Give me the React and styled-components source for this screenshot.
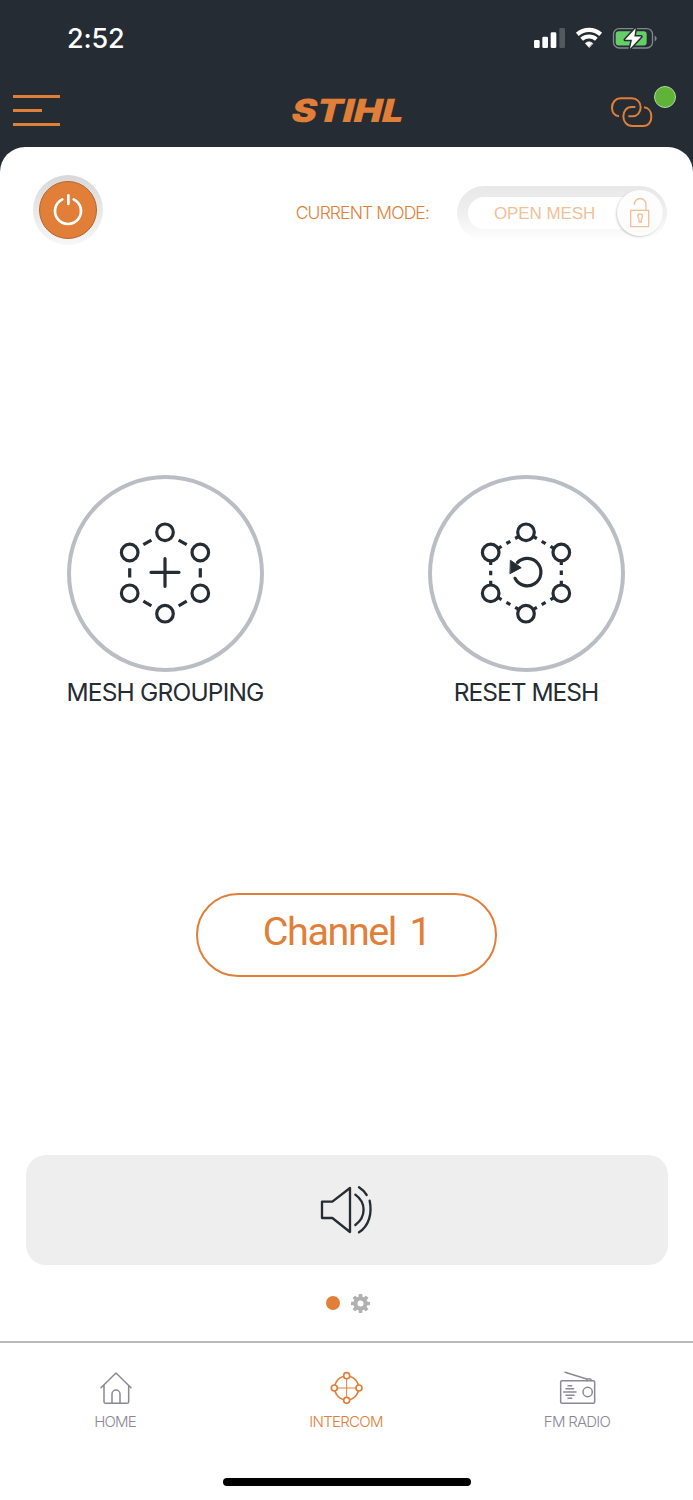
import React from "react";
import styled, { createGlobalStyle } from "styled-components";

const orange = "#e17e37";
const ink = "#252c33";
const muted = "#8c8896";

const Global = createGlobalStyle`
  *, *::before, *::after { box-sizing: border-box; }
  body { margin: 0; background: ${ink}; }
  button { font: inherit; color: inherit; background: none; border: 0; padding: 0; }
`;

const Screen = styled.div`
  width: 693px;
  height: 1500px;
  display: flex;
  flex-direction: column;
  overflow: hidden;
  background: ${ink};
  font-family: Inter, "Liberation Sans", sans-serif;
`;

const Icon = styled.svg`
  display: block;
  flex: none;
  width: ${(p) => p.$w}px;
  height: ${(p) => p.$h}px;
  overflow: visible;
  fill: none;
  stroke: ${(p) => p.$color || "none"};
  stroke-width: ${(p) => p.$stroke || 0};
  stroke-linecap: round;
  stroke-linejoin: round;
`;

/* status bar */
const StatusBar = styled.div`
  height: 76px;
  flex: none;
  display: flex;
  justify-content: space-between;
  align-items: center;
  padding: 0 36px 0 67px;
`;

const Clock = styled.span`
  padding-top: 2px;
  color: #fff;
  font-size: 27px;
  font-weight: 550;
  line-height: 32px;
  letter-spacing: -0.2px;
`;

const StatusIcons = styled.div`
  display: flex;
  align-items: center;
  gap: 11px;
`;

/* app header */
const Header = styled.header`
  height: 71px;
  flex: none;
  display: grid;
  grid-template-columns: 1fr auto 1fr;
  align-items: start;
  padding: 0 17px 0 13px;
`;

const MenuButton = styled.button`
  width: 47px;
  margin-top: 19px;
  display: flex;
  flex-direction: column;
  gap: 11px;
`;

const MenuLine = styled.span`
  height: 3px;
  width: ${(p) => p.$w}px;
  background: ${orange};
`;

const Logo = styled.svg`
  display: block;
  width: 111px;
  height: 24px;
  margin-top: 22px;
  overflow: visible;
`;

const LinkStatus = styled.div`
  justify-self: end;
  display: flex;
  align-items: flex-start;
  gap: 1px;
`;

const LinkIconBox = styled.div`
  padding-top: 21px;
`;

const OnlineDot = styled.span`
  width: 22px;
  height: 22px;
  margin-top: 10px;
  border-radius: 50%;
  background: #5fb336;
  border: 1px solid #b4d7a2;
`;

/* main sheet */
const Sheet = styled.main`
  flex: 1;
  display: flex;
  flex-direction: column;
  background: #fff;
  border-radius: 25px 25px 0 0;
`;

const TopRow = styled.div`
  display: flex;
  align-items: center;
  padding: 28px 26px 0 33px;
`;

const PowerRing = styled.button`
  width: 70px;
  height: 70px;
  border-radius: 50%;
  padding: 6px;
  background: linear-gradient(#d8d8d8, #f7f7f7);
`;

const PowerFace = styled.span`
  width: 58px;
  height: 58px;
  border-radius: 50%;
  display: grid;
  place-items: center;
  background: ${orange};
  border: 1.5px solid #b5672f;
`;

const ModeLabel = styled.span`
  margin: 6px 28px 0 auto;
  color: ${orange};
  font-size: 17.5px;
  font-weight: 300;
  letter-spacing: -0.87px;
  line-height: 20px;
  white-space: nowrap;
`;

const ModeToggle = styled.div`
  width: 210px;
  height: 54px;
  margin-top: 6px;
  padding: 4px 4px 0 11px;
  border-radius: 27px;
  display: flex;
  align-items: center;
  background: linear-gradient(#e8e8e8, #efefef 50%, #fefefe);
`;

const ModeValue = styled.span`
  flex: 1;
  height: 32px;
  margin: 0 -24px 4px 0;
  padding-left: 26px;
  border-radius: 16px;
  background: #fff;
  color: #f2bf98;
  font-family: "Liberation Sans", Arial, sans-serif;
  font-size: 17px;
  line-height: 33px;
  letter-spacing: -0.1px;
  white-space: nowrap;
`;

const ModeKnob = styled.span`
  width: 46px;
  height: 46px;
  margin-bottom: 4px;
  flex: none;
  border-radius: 50%;
  display: grid;
  place-items: center;
  background: #fdfdfd;
  box-shadow: -1px 1px 2px rgba(0, 0, 0, 0.18);
`;

const Actions = styled.section`
  display: flex;
  justify-content: space-between;
  padding: 230px 68px 0 67px;
`;

const Action = styled.button`
  width: 197px;
  display: flex;
  flex-direction: column;
  align-items: center;
`;

const ActionCircle = styled.span`
  width: 197px;
  height: 197px;
  padding: 0 2px 2px 0;
  border: 4px solid #babec4;
  border-radius: 50%;
  display: grid;
  place-items: center;
`;

const ActionLabel = styled.span`
  margin-top: 5px;
  margin-right: 1px;
  color: ${ink};
  font-size: 24.5px;
  font-weight: 370;
  line-height: 30px;
  letter-spacing: ${(p) => p.$tracking}px;
  white-space: nowrap;
`;

const ChannelButton = styled.button`
  width: 301px;
  height: 84px;
  margin: 186px auto 0;
  padding-bottom: 6px;
  border: 2px solid ${orange};
  border-radius: 42px;
  color: ${orange};
  font-family: Roboto, "Open Sans", sans-serif;
  font-size: 39.5px;
  font-weight: 400;
  line-height: 74px;
  letter-spacing: -1.4px;
  word-spacing: 5px;
  white-space: nowrap;
`;

const VolumeBar = styled.button`
  height: 110px;
  margin: 178px 25.5px 0;
  padding-left: 1px;
  border-radius: 20px;
  display: grid;
  place-items: center;
  background: #eee;
`;

const Pager = styled.div`
  height: 76px;
  display: flex;
  align-items: center;
  justify-content: center;
  gap: 11px;
  padding-left: 3px;
`;

const PageDot = styled.span`
  width: 14px;
  height: 14px;
  border-radius: 50%;
  background: ${orange};
`;

const TabBar = styled.nav`
  flex: 1;
  display: flex;
  flex-direction: column;
  justify-content: space-between;
  align-items: center;
  border-top: 2px solid #b9b9bb;
`;

const Tabs = styled.div`
  width: 100%;
  display: grid;
  grid-template-columns: repeat(3, 1fr);
`;

const Tab = styled.button`
  display: flex;
  flex-direction: column;
  align-items: center;
  padding-top: 28px;
  color: ${(p) => (p.$active ? orange : muted)};
`;

const TabLabel = styled.span`
  margin-top: 6px;
  margin-right: 1px;
  font-size: 15px;
  font-weight: 350;
  letter-spacing: ${(p) => p.$tracking}px;
  line-height: 20px;
  white-space: nowrap;
`;

const HomeIndicator = styled.div`
  width: 248px;
  height: 8px;
  margin-bottom: 14px;
  border-radius: 4px;
  background: #000;
`;

const corners = [
  [0, -40.7],
  [35.3, -20.5],
  [35.3, 20.3],
  [0, 40.7],
  [-35.3, 20.3],
  [-35.3, -20.5],
];

function MeshIcon({ dash, offset = 0, children }) {
  return (
    <Icon $w={94} $h={104} $color={ink} $stroke={3.2} viewBox="-47 -52 94 104">
      {corners.map(([x, y], i) => {
        const [nx, ny] = corners[(i + 1) % 6];
        return (
          <line key={i} x1={x} y1={y} x2={nx} y2={ny} strokeLinecap="butt" strokeDasharray={dash} strokeDashoffset={offset} />
        );
      })}
      {corners.map(([x, y], i) => (
        <circle key={i} cx={x} cy={y} r="8.3" fill="#fff" />
      ))}
      {children}
    </Icon>
  );
}

function SignalIcon() {
  return (
    <Icon $w={31} $h={20} viewBox="101 84 93 60">
      <g fill="#fff">
        <rect x="101" y="120" width="17" height="24" rx="4" />
        <rect x="126" y="110" width="17" height="34" rx="4" />
        <rect x="151" y="97" width="17" height="47" rx="4" />
      </g>
      <rect x="177" y="84" width="17" height="60" rx="4" fill="#545960" />
    </Icon>
  );
}

function WifiIcon() {
  return (
    <Icon $w={26} $h={20} $color="#fff" viewBox="227 84 78 60">
      <path strokeLinecap="butt" strokeWidth="13" d="M231 103 A53 53 0 0 1 301 103" />
      <path strokeLinecap="butt" strokeWidth="12" d="M244 118 A33 33 0 0 1 288 118" />
      <path fill="#fff" strokeWidth="2" d="M266 142 L255 130 A17 17 0 0 1 277 130 Z" />
    </Icon>
  );
}

function BatteryIcon() {
  return (
    <Icon $w={44} $h={21} viewBox="340 83 132 62">
      <rect x="341.5" y="84.5" width="117" height="58" rx="17" stroke="#83888c" strokeWidth="4" />
      <path d="M465 105 Q471 109 471 114 Q471 119 465 123 Z" fill="#83888c" />
      <rect x="348" y="92" width="93" height="43" rx="9" fill="#65ce66" />
      <path d="M408 83 L376 118 H397 L391 145 L425 108 H404 Z" fill="#fff" stroke={ink} strokeWidth="9" paintOrder="stroke" />
    </Icon>
  );
}

function LinkIcon() {
  return (
    <Icon $w={42} $h={30} $color={orange} $stroke={6} viewBox="333 293 126 90">
      <path d="M357 351 C345 349 336 340 336 325 C336 309 347 297 362 297 H395 C411 297 422 308 422 324 C422 340 411 351 397 351 H385" strokeLinecap="butt" />
      <path d="M406 323 H395 C379 323 370 336 370 351 C370 367 380 380 397 380 H430 C445 380 454 368 454 352 C454 336 445 325 432 324" strokeLinecap="butt" />
    </Icon>
  );
}

function GearIcon() {
  return (
    <Icon $w={19} $h={19} viewBox="-28 -28 56 56">
      <circle r="15" stroke="#b1b1b1" strokeWidth="12" />
      {[0, 45, 90, 135, 180, 225, 270, 315].map((a) => (
        <rect key={a} x="-5.5" y="-28" width="11" height="11" rx="2" fill="#b1b1b1" transform={`rotate(${a})`} />
      ))}
    </Icon>
  );
}

export default function App() {
  return (
    <Screen>
      <Global />
      <StatusBar>
        <Clock>2:52</Clock>
        <StatusIcons>
          <SignalIcon />
          <WifiIcon />
          <BatteryIcon />
        </StatusIcons>
      </StatusBar>

      <Header>
        <MenuButton aria-label="Menu">
          <MenuLine $w={47} />
          <MenuLine $w={29} />
          <MenuLine $w={47} />
        </MenuButton>
        <Logo viewBox="0 0 111 24">
          <text
            transform="translate(0.5 23.6) skewX(-14)"
            textLength="112"
            lengthAdjust="spacingAndGlyphs"
            fontFamily="Inter, sans-serif"
            fontWeight="900"
            fontSize="32"
            fill={orange}
          >
            STIHL
          </text>
        </Logo>
        <LinkStatus>
          <LinkIconBox>
            <LinkIcon />
          </LinkIconBox>
          <OnlineDot />
        </LinkStatus>
      </Header>

      <Sheet>
        <TopRow>
          <PowerRing aria-label="Power">
            <PowerFace>
              <Icon $w={28} $h={30} $color="#fff" $stroke={8} viewBox="162 584 84 90">
                <path d="M187 597 A39 39 0 1 0 221 597 M205 585 V611" />
              </Icon>
            </PowerFace>
          </PowerRing>
          <ModeLabel>CURRENT MODE:</ModeLabel>
          <ModeToggle>
            <ModeValue>OPEN MESH</ModeValue>
            <ModeKnob>
              <Icon $w={19} $h={30} $color="#f2bf98" $stroke={4} viewBox="1053 84 57 90">
                <path strokeLinejoin="miter" d="M1052 121 H1106 V170 H1052 Z" />
                <path d="M1063 103 A17.500 17.500 0 0 1 1098 103 V120" />
                <path d="M1077 149 C1077 145 1073 144 1073 139 A7.500 7.500 0 0 1 1088 139 C1088 144 1084 145 1084 149 V156 H1077 Z" />
              </Icon>
            </ModeKnob>
          </ModeToggle>
        </TopRow>

        <Actions>
          <Action>
            <ActionCircle>
              <MeshIcon dash="0 15.7 9.3 100">
                <path d="M-14 -0.7 H14 M0 -14.500 V13.300" />
              </MeshIcon>
            </ActionCircle>
            <ActionLabel $tracking={-0.82}>MESH GROUPING</ActionLabel>
          </Action>
          <Action>
            <ActionCircle>
              <MeshIcon dash="4.500 5.600" offset={2.1}>
                <path d="M-11 5.300 A13.700 13.700 0 1 0 -8.500 -10.500" />
                <path d="M-15.300 -12.500 L-4.800 -5.300 L-15.700 0.500 Z" fill={ink} strokeWidth="1" />
              </MeshIcon>
            </ActionCircle>
            <ActionLabel $tracking={-1}>RESET MESH</ActionLabel>
          </Action>
        </Actions>

        <ChannelButton>Channel 1</ChannelButton>

        <VolumeBar aria-label="Volume">
          <Icon $w={52} $h={48} $color={ink} $stroke={7} viewBox="93 78 156 144">
            <path d="M96 125 H127 L180 84 V216 L127 174 H96 Z" />
            <path d="M196 104 C229 128 229 170 196 195 M207 82 Q221 91 230 105 M239 122 C247 160 237 198 207 217" />
          </Icon>
        </VolumeBar>

        <Pager>
          <PageDot />
          <GearIcon />
        </Pager>

        <TabBar>
          <Tabs>
            <Tab>
              <Icon $w={32} $h={35} $color={muted} $stroke={4.5} viewBox="119 123 96 105">
                <path d="M122 173 L167 129 L212 173 M131 166 V215 Q131 220 136 220 H200 Q205 220 205 215 V166 M155 219 V192 A12 12 0 0 1 179 192 V219" />
              </Icon>
              <TabLabel $tracking={-0.8}>HOME</TabLabel>
            </Tab>
            <Tab $active>
              <Icon $w={32} $h={35} $color={orange} $stroke={5} viewBox="-47 -51 96 105">
                <path strokeWidth="3" d="M-36 0 H36 M0 -36 V36" />
                <circle r="36" />
                {[[0, -37], [37, 0], [0, 37], [-37, 0]].map(([x, y]) => (
                  <circle key={`${x},${y}`} cx={x} cy={y} r="9" fill="#fff" />
                ))}
              </Icon>
              <TabLabel $tracking={-0.7}>INTERCOM</TabLabel>
            </Tab>
            <Tab>
              <Icon $w={36} $h={35} $color={muted} $stroke={4.5} viewBox="810 48 108 105">
                <path d="M825 52 L890 72 M889 77 A8.500 8.500 0 0 1 905 77" />
                <rect x="812" y="77" width="102" height="68" rx="4" />
                <circle cx="893" cy="111" r="14" />
                <path d="M834 92 H845 M828 101 H851 M821 111 H858 M828 121 H852 M834 130 H845" />
              </Icon>
              <TabLabel $tracking={-0.75}>FM RADIO</TabLabel>
            </Tab>
          </Tabs>
          <HomeIndicator />
        </TabBar>
      </Sheet>
    </Screen>
  );
}
